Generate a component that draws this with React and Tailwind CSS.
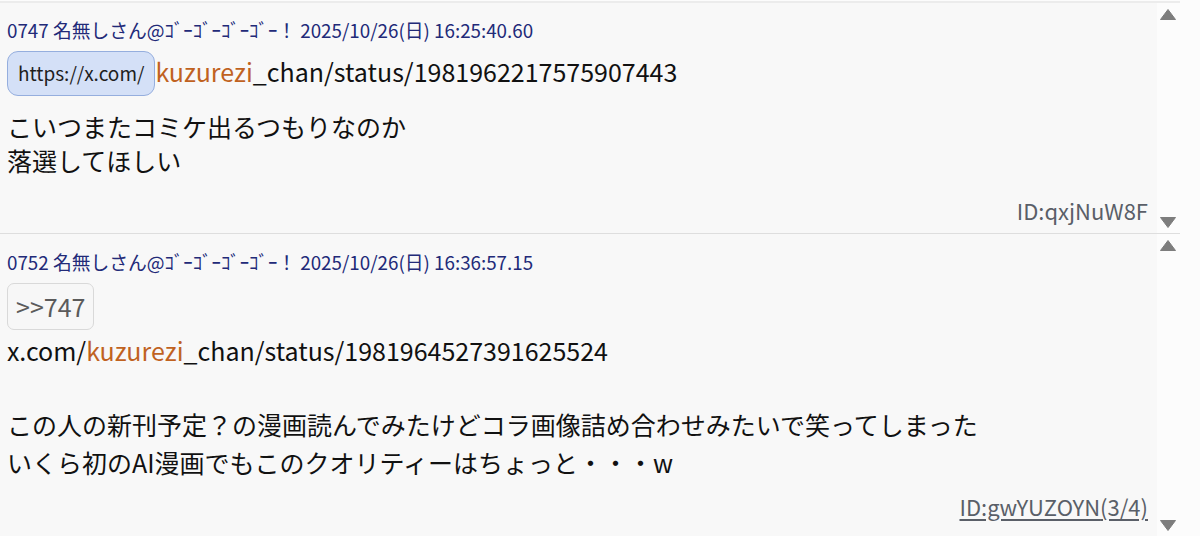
import React from 'react';

const FONT = { fontFamily: '"Noto Sans CJK JP", "Noto Sans", sans-serif' };

const Up = () => (
  <svg width="16" height="11" viewBox="0 0 16 11" className="block">
    <path d="M8 0.5 L15.5 10.5 L0.5 10.5 Z" fill="#7d7d7d" stroke="#7d7d7d" strokeLinejoin="round" />
  </svg>
);

const Down = () => (
  <svg width="16" height="11" viewBox="0 0 16 11" className="block">
    <path d="M0.5 0.5 L15.5 0.5 L8 10.5 Z" fill="#7d7d7d" stroke="#7d7d7d" strokeLinejoin="round" />
  </svg>
);

const Header = ({ no, date }) => (
  <div className="text-[18.8px] leading-[24px] text-[#222a78] whitespace-nowrap">
    {no} 名無しさん@ｺﾞｰｺﾞｰｺﾞｰｺﾞｰ！ {date}
  </div>
);

const Post = ({ children, arrowTop, arrowBottom, last }) => (
  <div className={`flex w-[1180px] ${last ? '' : 'border-b border-[#dedede]'}`}>
    <div className="flex-1 bg-[#f8f8f8] pl-[7px]">{children}</div>
    <div className="w-[23px] flex flex-col justify-between items-start pl-[3px]" style={{ paddingTop: arrowTop, paddingBottom: arrowBottom }}>
      <Up />
      <Down />
    </div>
  </div>
);

export default function App() {
  return (
    <div className="w-[1200px] h-[536px] overflow-hidden bg-[#fcfcfc]" style={FONT}>
      <div className="h-[1px] bg-[#fcfcfc]" />
      <div className="border-t-2 border-[#ececec] w-[1180px]" />
      <Post arrowTop={6} arrowBottom={5}>
        <div className="pt-[15px] pr-[9px]">
          <Header no="0747" date="2025/10/26(日) 16:25:40.60" />
          <div className="mt-[9px] flex items-center">
            <span className="h-[45px] px-[10px] flex items-center rounded-[11px] bg-[#d4e0f7] border border-[#95aede] text-[19px] text-[#1e1e1e]">
              https://x.com/
            </span>
            <span className="text-[25px] leading-[30px] pb-[5px] text-[#111]">
              <span className="text-[#c0621f]">kuzurezi</span>_chan/status/1981962217575907443
            </span>
          </div>
          <div className="mt-[13px] text-[25px] leading-[34px] text-[#111]">
            <div>こいつまたコミケ出るつもりなのか</div>
            <div>落選してほしい</div>
          </div>
          <div className="mt-[19px] pb-[9px] text-right text-[22px] leading-[28px] text-[#5a5f68]">
            ID:qxjNuW8F
          </div>
        </div>
      </Post>
      <Post arrowTop={6} arrowBottom={5} last>
        <div className="pt-[16px] pr-[9px] h-[302px]">
          <Header no="0752" date="2025/10/26(日) 16:36:57.15" />
          <div className="mt-[9px] flex">
            <span className="h-[47px] px-[8px] flex items-center rounded-[7px] bg-[#f7f7f7] border border-[#d9d9d9] text-[25px] text-[#5b5b5b]">
              &gt;&gt;747
            </span>
          </div>
          <div className="mt-[1px] text-[25px] leading-[38px] text-[#111]">
            <div>
              x.com/<span className="text-[#c0621f]">kuzurezi</span>_chan/status/1981964527391625524
            </div>
            <div className="h-[38px]" />
          </div>
          <div className="-mt-[2px] text-[25px] leading-[38px] text-[#111]">
            <div>この人の新刊予定？の漫画読んでみたけどコラ画像詰め合わせみたいで笑ってしまった</div>
            <div>いくら初のAI漫画でもこのクオリティーはちょっと・・・w</div>
          </div>
          <div className="mt-[11px] text-right text-[22px] leading-[28px] text-[#5a5f68]">
            <span className="underline underline-offset-[3px]">ID:gwYUZOYN</span>
            <span className="underline underline-offset-[3px]">(3/4)</span>
          </div>
        </div>
      </Post>
    </div>
  );
}
